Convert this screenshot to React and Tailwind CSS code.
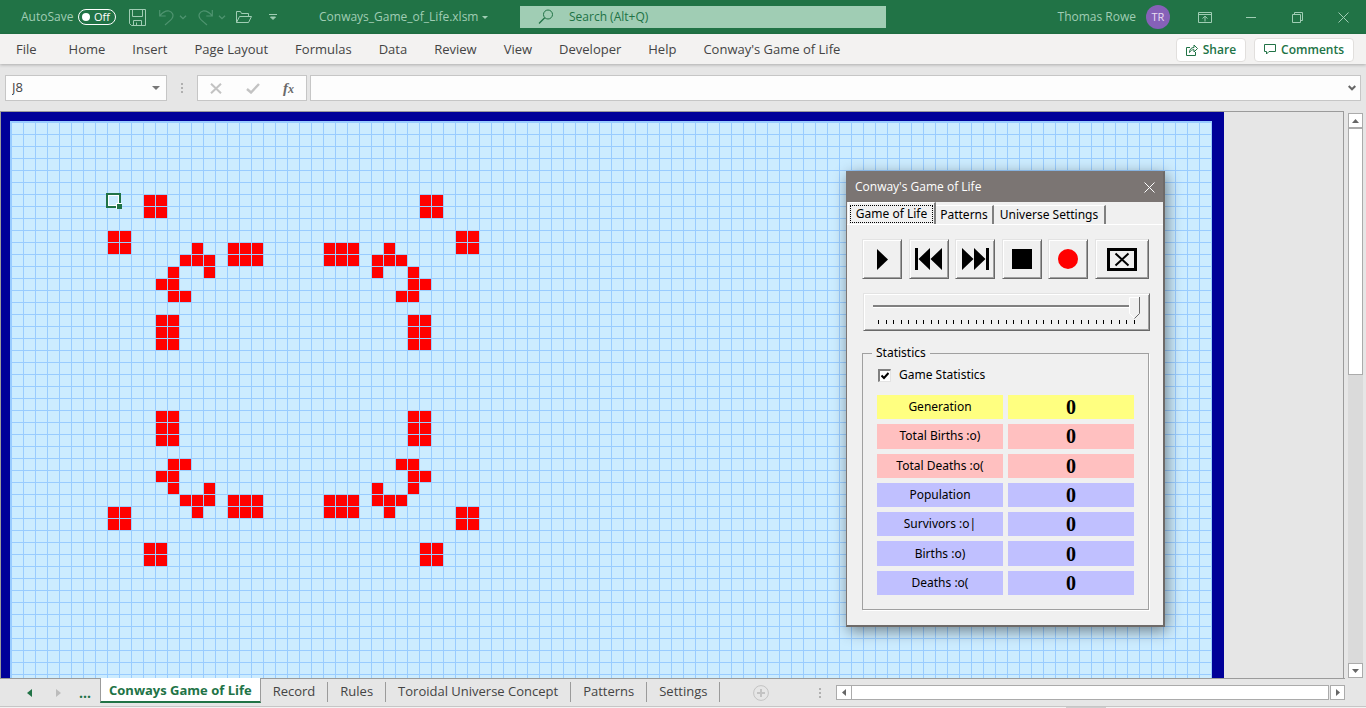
import React, { useState } from 'react';

const menuItems = ['Home', 'Insert', 'Page Layout', 'Formulas', 'Data', 'Review', 'View', 'Developer', 'Help', "Conway's Game of Life"];

const sheetTabs = ['Record', 'Rules', 'Toroidal Universe Concept', 'Patterns', 'Settings'];

const stats = [
  { label: 'Generation', value: 0, color: 'bg-[#ffff80]' },
  { label: 'Total Births :o)', value: 0, color: 'bg-[#ffc0c0]' },
  { label: 'Total Deaths :o(', value: 0, color: 'bg-[#ffc0c0]' },
  { label: 'Population', value: 0, color: 'bg-[#c0c0ff]' },
  { label: 'Survivors :o|', value: 0, color: 'bg-[#c0c0ff]' },
  { label: 'Births :o)', value: 0, color: 'bg-[#c0c0ff]' },
  { label: 'Deaths :o(', value: 0, color: 'bg-[#c0c0ff]' },
];

// top left quarter of the pattern, [column, row]
const quarter = [
  [11, 6], [12, 6], [11, 7], [12, 7],
  [8, 9], [9, 9], [8, 10], [9, 10],
  [15, 10], [14, 11], [15, 11], [16, 11], [16, 12],
  [18, 10], [19, 10], [20, 10], [18, 11], [19, 11], [20, 11],
  [13, 12], [12, 13], [13, 13], [13, 14], [14, 14],
  [12, 16], [13, 16], [12, 17], [13, 17], [12, 18], [13, 18],
];

// the universe is symmetric both ways
const liveCells = quarter.flatMap(([c, r]) => [[c, r], [46 - c, r], [c, 42 - r], [46 - c, 42 - r]]);

const raised = 'border border-t-[#e3e3e3] border-l-[#e3e3e3] border-r-[#696969] border-b-[#696969] bg-[#f0f0f0] shadow-[inset_1px_1px_0_#ffffff,inset_-1px_-1px_0_#a0a0a0]';

function TitleBar() {
  const [autoSave, setAutoSave] = useState(false);
  return (
    <header className="flex h-[34px] shrink-0 items-center bg-[#217346] text-[12px] text-[#a0cdb4]">
      <div className="flex h-full w-[520px] shrink-0 items-center pl-[21px]">
        <span className="w-[57px]">AutoSave</span>
        <button onClick={() => setAutoSave(!autoSave)} aria-pressed={autoSave} aria-label="AutoSave" className="flex h-4 w-[38px] items-center justify-between rounded-full border border-white pr-[5px] pl-[3px] text-[11px] leading-3 text-white">
          <span className="h-2 w-2 rounded-full bg-white" />
          {autoSave ? 'On' : 'Off'}
        </button>
        <button aria-label="Save" className="ml-[13px]">
          <svg width="17" height="17" viewBox="0 0 17 17" fill="none" stroke="currentColor"><path d="M.5.5h16v16H2.5l-2-2zM3.500 .5v7h10v-7M4.500 16.500v-5h8v5M7.500 16.500v-3" /></svg>
        </button>
        <div className="flex items-center text-[#4f9470]">
          <button aria-label="Undo" className="ml-[13px]">
            <svg width="15" height="17" viewBox="0 0 15 17" fill="none" stroke="currentColor" strokeWidth="1.200"><path d="M.7 1v6h6M1 6.700C4 3 7 1.600 10 2c3.800.8 5 4.500 3 7.500-1 1.500-4 4-7 6.500" /></svg>
          </button>
          <button aria-label="Undo list" className="ml-[5px]">
            <svg width="8" height="5" viewBox="0 0 8 5" fill="none" stroke="currentColor" strokeWidth="1.300"><path d="M1 .7l3 3 3-3" /></svg>
          </button>
          <button aria-label="Redo" className="ml-[11px]">
            <svg width="15" height="17" viewBox="0 0 15 17" fill="none" stroke="currentColor" strokeWidth="1.200"><path d="M14.300 1v6h-6M14 6.700C11 3 8 1.600 5 2 1.200 2.800 0 6.500 2 9.500c1 1.500 4 4 7 6.500" /></svg>
          </button>
          <button aria-label="Redo list" className="ml-[5px]">
            <svg width="8" height="5" viewBox="0 0 8 5" fill="none" stroke="currentColor" strokeWidth="1.300"><path d="M1 .7l3 3 3-3" /></svg>
          </button>
        </div>
        <button aria-label="Open" className="ml-[10px]">
          <svg width="16" height="13" viewBox="0 0 16 13" fill="none" stroke="currentColor"><path d="M.5 11.500v-11h4l1 2h7v3M.5 11.500l3-6h12l-3 6z" /></svg>
        </button>
        <button aria-label="Customize toolbar" className="ml-[17px]">
          <svg width="8" height="7" viewBox="0 0 8 7" fill="none" stroke="currentColor"><path d="M0 .5h8" /><path d="M1.500 3l2.500 2.500L6.500 3z" fill="currentColor" /></svg>
        </button>
        <button className="ml-[42px] flex items-center gap-[4px]">
          Conways_Game_of_Life.xlsm
          <svg width="6" height="3" viewBox="0 0 6 3" fill="currentColor"><path d="M0 0h6L3 3z" /></svg>
        </button>
      </div>
      <label className="flex h-[22px] w-[366px] items-center bg-[#a0cdb4] pl-[18px] text-[#217346]">
        <svg width="16" height="16" viewBox="0 0 16 16" fill="none" stroke="currentColor"><circle cx="10" cy="5.500" r="4.500" /><path d="M6.700 8.700L1 14.500" strokeWidth="1.300" /></svg>
        <input aria-label="Search" placeholder="Search (Alt+Q)" className="ml-[15px] min-w-0 flex-1 bg-transparent outline-none placeholder:text-[#217346]" />
      </label>
      <div className="ml-auto flex items-center pr-[17px]">
        <span>Thomas Rowe</span>
        <button aria-label="Account" className="ml-[10px] h-6 w-6 rounded-full bg-[#8661b8] text-[11px] text-[#e8def2]">TR</button>
        <button aria-label="Ribbon display options" className="ml-[28px]">
          <svg width="14" height="11" viewBox="0 0 14 11" fill="none" stroke="currentColor"><path d="M.5.5h13v10H.5zM.5 2.500h13M7 9.500V4.500M4.500 6.500L7 4.200l2.500 2.300" /></svg>
        </button>
        <button aria-label="Minimize" className="ml-[34px]">
          <svg width="10" height="11" viewBox="0 0 10 11" stroke="currentColor"><path d="M0 5.500h10" /></svg>
        </button>
        <button aria-label="Restore" className="ml-[36px]">
          <svg width="11" height="11" viewBox="0 0 11 11" fill="none" stroke="currentColor"><path d="M.5 2.500h8v8h-8zM2.500 2.500v-2h8v8h-2" /></svg>
        </button>
        <button aria-label="Close" className="ml-[35px]">
          <svg width="11" height="11" viewBox="0 0 11 11" stroke="currentColor"><path d="M.5.5l10 10M10.500.5l-10 10" /></svg>
        </button>
      </div>
    </header>
  );
}

function MenuBar() {
  return (
    <nav className="relative flex h-[30px] shrink-0 items-center bg-[#f3f2f1] pt-px text-[13px] text-[#444444] shadow-[0_1px_3px_rgba(0,0,0,0.250)]">
      <button className="pr-[19px] pl-[16px]">File</button>
      {menuItems.map(item => (
        <button key={item} className="pr-[14px] pl-[13px]">{item}</button>
      ))}
      <div className="ml-auto flex gap-[8px] pr-3 text-[12px] font-semibold text-[#217346]">
        <button className="flex h-6 items-center gap-[5px] rounded-sm border border-[#e1dfdd] bg-white px-[9px]">
          <svg width="12" height="12" viewBox="0 0 12 12" fill="none" stroke="currentColor"><path d="M4 3.500H.5v8h9V8M3.500 8.500c0-3 1.500-5 4.500-5V1l3.500 3.500L8 8V5.700c-2 0-3.500.8-4.500 2.800z" /></svg>
          Share
        </button>
        <button className="flex h-6 items-center gap-[5px] rounded-sm border border-[#e1dfdd] bg-white px-[9px]">
          <svg width="12" height="11" viewBox="0 0 12 11" fill="none" stroke="currentColor"><path d="M.5.5h11v7H5l-2.500 2.500V7.500h-2z" /></svg>
          Comments
        </button>
      </div>
    </nav>
  );
}

function Dots() {
  return (
    <span className="flex flex-col gap-[2px]">
      <span className="h-[2px] w-[2px] bg-[#b0b0b0]" />
      <span className="h-[2px] w-[2px] bg-[#b0b0b0]" />
      <span className="h-[2px] w-[2px] bg-[#b0b0b0]" />
    </span>
  );
}

function FormulaBar() {
  return (
    <div className="flex h-[47px] shrink-0 items-center px-[5px] pt-px text-[13px] text-[#444444]">
      <div className="flex h-[26px] w-[162px] items-center border border-[#c6c6c6] bg-[#fdfdfd] pr-[6px] pl-[6px]">
        <input aria-label="Name box" defaultValue="J8" className="min-w-0 flex-1 bg-transparent outline-none" />
        <button aria-label="Name list">
          <svg width="8" height="4" viewBox="0 0 8 4" fill="#777777"><path d="M0 0h8L4 4z" /></svg>
        </button>
      </div>
      <div className="flex w-[30px] justify-center"><Dots /></div>
      <div className="flex h-[26px] w-[110px] items-center justify-between border border-[#c6c6c6] bg-[#fdfdfd] pr-3 pl-[12px]">
        <button aria-label="Cancel">
          <svg width="12" height="11" viewBox="0 0 12 11" stroke="#c3c3c3" strokeWidth="2"><path d="M1 .7l10 9.600M11 .7L1 10.300" /></svg>
        </button>
        <button aria-label="Enter">
          <svg width="14" height="11" viewBox="0 0 14 11" fill="none" stroke="#c3c3c3" strokeWidth="2.400"><path d="M1 6l4 3.500L13 1" /></svg>
        </button>
        <button aria-label="Insert function" className="font-['Liberation_Serif',serif] text-[15px] leading-4 font-bold text-[#6a6a6a] italic">f<span className="text-[12px]">x</span></button>
      </div>
      <div className="ml-[3px] flex h-[26px] flex-1 items-center border border-[#c6c6c6] bg-[#fdfdfd] pr-1">
        <input aria-label="Formula" className="min-w-0 flex-1 bg-transparent px-2 outline-none" />
        <button aria-label="Expand formula bar">
          <svg width="8" height="6" viewBox="0 0 8 6" fill="none" stroke="#666666" strokeWidth="2"><path d="M.7 1L4 4.300 7.300 1" /></svg>
        </button>
      </div>
    </div>
  );
}

function Sheet() {
  return (
    <div className="min-w-0 flex-1 overflow-hidden border-t border-r border-l border-[#9b9b9b]">
      <div className="h-full w-[1223px] bg-[#000099] pt-[9px] pr-3 pl-[9px]">
        <div className="h-full border-t-2 border-l-2 border-r border-[#99ccff]">
          <div className="relative grid h-full auto-rows-[12px] grid-cols-[repeat(100,12px)] content-start overflow-hidden bg-[#ccecff] bg-[linear-gradient(to_right,transparent_11px,#99ccff_11px),linear-gradient(to_bottom,transparent_11px,#99ccff_11px)] bg-[size:12px_12px]">
            {liveCells.map(([c, r]) => (
              <div key={`${c}-${r}`} className="h-[11px] w-[11px] bg-[#ff0000]" style={{ gridColumn: c + 1, gridRow: r + 1 }} />
            ))}
            <div className="absolute top-[70px] left-[94px] h-[15px] w-[15px] border-2 border-[#217346] shadow-[inset_0_0_0_1px_#ffffff]">
              <span className="absolute -right-[3px] -bottom-[3px] h-[6px] w-[6px] border-t border-l border-white bg-[#217346]" />
            </div>
          </div>
        </div>
      </div>
    </div>
  );
}

function VerticalScroll() {
  return (
    <div className="flex w-[22px] shrink-0 flex-col pt-[2px] pr-[3px] pl-1">
      <button aria-label="Scroll up" className="flex h-[15px] shrink-0 items-center justify-center border border-[#ababab] bg-white">
        <svg width="7" height="4" viewBox="0 0 7 4" fill="#666666"><path d="M0 4h7L3.500 0z" /></svg>
      </button>
      <div className="flex-1 bg-[#dadada]">
        <div className="h-[247px] border border-[#ababab] bg-white" />
      </div>
      <button aria-label="Scroll down" className="flex h-[15px] shrink-0 items-center justify-center border border-[#ababab] bg-white">
        <svg width="7" height="4" viewBox="0 0 7 4" fill="#666666"><path d="M0 0h7L3.500 4z" /></svg>
      </button>
    </div>
  );
}

function SheetTabs() {
  return (
    <footer className="shrink-0 bg-[#e6e6e6] text-[13px] text-[#444444]">
      <div className="flex h-[28px]">
        <div className="flex flex-1 border-t border-[#9b9b9b]">
          <div className="flex w-[100px] items-center pl-[27px]">
            <button aria-label="Previous sheet"><svg width="5" height="8" viewBox="0 0 5 8" fill="#217346"><path d="M5 0v8L0 4z" /></svg></button>
            <button aria-label="Next sheet" className="ml-[24px]"><svg width="5" height="8" viewBox="0 0 5 8" fill="#bcbcbc"><path d="M0 0v8l5-4z" /></svg></button>
            <button className="ml-[18px] text-[14px] font-bold text-[#217346]">...</button>
          </div>
          <button className="-mt-px h-[25px] border-r border-b-2 border-l border-r-[#9b9b9b] border-b-[#217346] border-l-[#9b9b9b] bg-white px-2 pt-[3px] font-bold text-[#217346]">Conways Game of Life</button>
          {sheetTabs.map(tab => (
            <button key={tab} className="mt-[3px] h-5 border-r border-[#9b9b9b] px-3">{tab}</button>
          ))}
          <button aria-label="New sheet" className="ml-[33px]">
            <svg width="16" height="16" viewBox="0 0 16 16" fill="none" stroke="#c3c3c3"><circle cx="8" cy="8" r="7.400" /><path d="M8 4v8M4 8h8" strokeWidth="2" /></svg>
          </button>
        </div>
        <div className="flex w-[526px] shrink-0 items-center border-t border-[#9b9b9b]">
          <Dots />
          <button aria-label="Scroll left" className="ml-[15px] flex h-[15px] w-[16px] items-center justify-center border border-[#ababab] bg-white">
            <svg width="4" height="7" viewBox="0 0 4 7" fill="#666666"><path d="M4 0v7L0 3.500z" /></svg>
          </button>
          <div className="-ml-px h-[15px] flex-1 border border-[#ababab] bg-white" />
          <button aria-label="Scroll right" className="ml-px flex h-[15px] w-[15px] items-center justify-center border border-[#ababab] bg-white">
            <svg width="4" height="7" viewBox="0 0 4 7" fill="#666666"><path d="M0 0v7l4-3.500z" /></svg>
          </button>
        </div>
        <div className="w-[21px]" />
      </div>
      <div className="flex h-[2px] border-t border-[#c6c6c6] bg-[#f3f3f3]">
        <span className="mr-[260px] ml-auto w-10 bg-[#cdcdcd]" />
      </div>
    </footer>
  );
}

function SpeedSlider() {
  const [speed, setSpeed] = useState(34);
  return (
    <div className={`relative mt-[14px] -mr-px ml-px h-[38px] ${raised}`}>
      <div className="mx-[9px] mt-[11px] h-[3px] border-t-2 border-b border-t-[#808080] border-b-white" />
      <div className="mx-[14px] mt-[12px] flex justify-between">
        {Array.from({ length: 35 }, (_, i) => (
          <span key={i} className="h-[4px] w-px bg-black" />
        ))}
      </div>
      <div className="absolute inset-y-0 right-[8px] left-[9px]">
        <svg width="12" height="22" viewBox="0 0 12 22" className="absolute top-[3px]" style={{ left: `calc((100% - 12px) * ${speed / 34})` }}>
          <path d="M.5.5h10v16l-5 5-5-5z" fill="#f0f0f0" />
          <path d="M10.500.5H.5v16l5 5" fill="none" stroke="#ffffff" />
          <path d="M10.500 0v16.500l-5 5" fill="none" stroke="#696969" />
        </svg>
        <input type="range" aria-label="Speed" min="0" max="34" value={speed} onChange={e => setSpeed(Number(e.target.value))} className="absolute inset-0 w-full opacity-0" />
      </div>
    </div>
  );
}

function GameDialog() {
  const [showStats, setShowStats] = useState(true);
  const btn = `flex h-10 w-10 items-center justify-center ${raised}`;
  return (
    <section className="absolute top-[171px] left-[846px] h-[456px] w-[319px] border-t border-r-2 border-b-2 border-l border-t-[#7b7573] border-r-[#6e6a68] border-b-[#6e6a68] border-l-[#7b7573] bg-[#f0f0f0] font-['Noto_Sans','DejaVu_Sans',sans-serif] text-[12px] text-black shadow-[2px_4px_14px_rgba(0,0,0,0.450)]">
      <div className="flex h-[30px] items-center justify-between bg-[#7b7573] pr-[8px] pl-2 font-['Open_Sans','Noto_Sans',sans-serif] text-[12px] text-white">
        <h2>Conway's Game of Life</h2>
        <button aria-label="Close dialog">
          <svg width="11" height="11" viewBox="0 0 11 11" stroke="currentColor"><path d="M.5.5l10 10M10.500.5l-10 10" /></svg>
        </button>
      </div>
      <div role="tablist" className="flex h-[23px] items-end border-b border-white pl-px">
        <button role="tab" aria-selected="true" className="h-[22px] w-[88px] border-t border-r-2 border-l border-t-white border-r-[#808080] border-l-white p-px">
          <span className="flex h-[18px] items-center justify-center border border-dotted border-black">Game of Life</span>
        </button>
        <button role="tab" aria-selected="false" className="h-[19px] w-[58px] border-t border-r-2 border-t-white border-r-[#808080]">Patterns</button>
        <button role="tab" aria-selected="false" className="h-[19px] w-[112px] border-t border-r-2 border-t-white border-r-[#808080]">Universe Settings</button>
      </div>
      <div className="pt-[14px] pr-[14px] pl-[15px]">
        <div className="flex justify-between">
          <button aria-label="Play" className={btn}>
            <svg width="11" height="21" viewBox="0 0 11 21"><path d="M0 0l11 10.500L0 21z" /></svg>
          </button>
          <button aria-label="Step back" className={btn}>
            <svg width="27" height="22" viewBox="0 0 27 22"><path d="M0 0h3v22H0zM15 0v22L3.500 11zM27 0v22L15.500 11z" /></svg>
          </button>
          <button aria-label="Step forward" className={btn}>
            <svg width="27" height="22" viewBox="0 0 27 22"><path d="M24 0h3v22h-3zM0 0l11.500 11L0 22zM12 0l11.500 11L12 22z" /></svg>
          </button>
          <button aria-label="Stop" className={btn}>
            <svg width="20" height="20" viewBox="0 0 20 20"><path d="M0 0h20v20H0z" /></svg>
          </button>
          <button aria-label="Record" className={btn}>
            <svg width="20" height="20" viewBox="0 0 20 20"><circle cx="10" cy="10" r="10" fill="#ff0000" /></svg>
          </button>
          <button aria-label="Clear" className={`flex h-10 w-[54px] items-center justify-center ${raised}`}>
            <svg width="30" height="23" viewBox="0 0 30 23" fill="none" stroke="black"><path d="M1.500 1.500h27v20h-27z" strokeWidth="3" /><path d="M8.500 5.500l13 12M21.500 5.500l-13 12" strokeWidth="2" /></svg>
          </button>
        </div>
        <SpeedSlider />
        <fieldset className="mt-[14px] h-[265px] border border-[#a0a0a0] shadow-[1px_1px_0_#ffffff]">
          <legend className="ml-[9px] px-1 leading-4">Statistics</legend>
          <label className="mt-[6px] ml-[15px] flex h-4 items-center gap-[8px]">
            <span className="relative h-[13px] w-[13px]">
              <input type="checkbox" checked={showStats} onChange={e => setShowStats(e.target.checked)} className="block h-[13px] w-[13px] appearance-none border-t-2 border-r border-b border-l-2 border-t-[#808080] border-r-[#e3e3e3] border-b-[#e3e3e3] border-l-[#808080] bg-white" />
              {showStats && (
                <svg width="8" height="8" viewBox="0 0 8 8" className="pointer-events-none absolute top-[3px] left-[3px]" fill="none" stroke="black" strokeWidth="2"><path d="M.5 3.500L3 6l4.500-5" /></svg>
              )}
            </span>
            Game Statistics
          </label>
          {showStats && (
            <table className="mt-[7px] ml-[9px] h-[210px] w-[267px] table-fixed border-separate border-spacing-[5px]">
              <tbody>
                {stats.map(s => (
                  <tr key={s.label} className="h-6">
                    <th scope="row" className={`p-0 text-center leading-6 font-normal ${s.color}`}>{s.label}</th>
                    <td className={`p-0 text-center font-['Liberation_Serif',serif] text-[20px] leading-6 font-bold ${s.color}`}>{s.value}</td>
                  </tr>
                ))}
              </tbody>
            </table>
          )}
        </fieldset>
      </div>
    </section>
  );
}

export default function App() {
  return (
    <div className="relative flex h-screen flex-col overflow-hidden bg-[#e6e6e6] font-['Open_Sans','Noto_Sans',sans-serif]">
      <TitleBar />
      <MenuBar />
      <FormulaBar />
      <main className="flex min-h-0 flex-1">
        <Sheet />
        <VerticalScroll />
      </main>
      <SheetTabs />
      <GameDialog />
    </div>
  );
}
